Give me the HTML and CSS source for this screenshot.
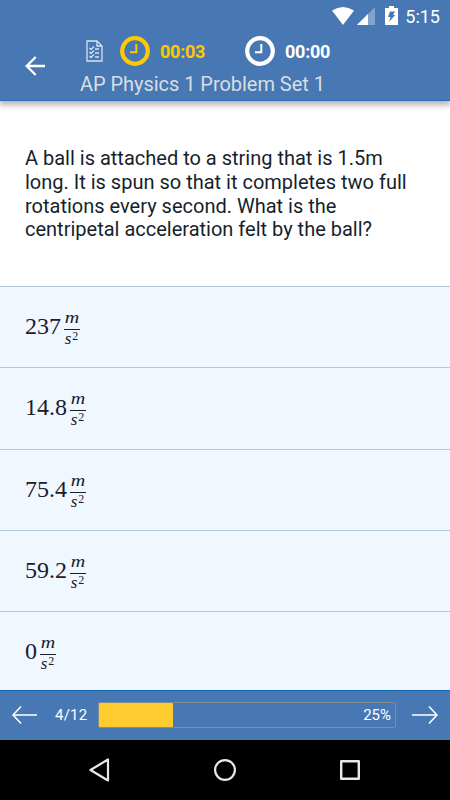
FILE: index.html
```html
<!DOCTYPE html>
<html lang="en">

<head>
    <meta charset="UTF-8">
    <meta name="viewport" content="width=device-width, initial-scale=1.0">
    <title>AP Physics 1 Problem Set 1</title>
    <link rel="stylesheet" href="styles.css">
</head>

<body>
    <header class="header">
        <!-- Status bar -->
        <div class="status-bar">
            <svg class="wifi" width="22" height="18" viewBox="0 0 22 18">
                <path d="M0 3.5Q11 -3.5 22 3.5L11 18Z" fill="#fff" />
            </svg>
            <svg class="signal" width="18" height="18" viewBox="0 0 18 18">
                <path d="M18 0V18H0Z" fill="#82a3cd" />
                <path d="M11 7V18H0Z" fill="#fff" />
            </svg>
            <svg class="battery" width="13" height="19" viewBox="0 0 13 19">
                <path d="M4 0H9V2H13V19H0V2H4Z" fill="#fff" />
                <path d="M5 5.5H10L8 9H10.2L4 16L5.5 11H3Z" fill="#4778b3" />
            </svg>
            <span class="clock">5:15</span>
        </div>

        <!-- Toolbar -->
        <div class="toolbar">
            <svg class="back-btn" width="20" height="20" viewBox="0 0 20 20">
                <path d="M20 10H2M10.7 1L1.7 10L10.7 19" fill="none" stroke="#fff" stroke-width="2.3" />
            </svg>
            <div class="toolbar-info">
                <div class="timers">
                    <svg class="checklist" width="17" height="22" viewBox="0 0 17 22">
                        <g fill="none" stroke="#d7e2ef" stroke-width="1.3">
                            <path d="M1 1H11L16 6V21H1ZM11 1V6H16" />
                            <path d="M3.5 8L5 9.5L8 6.5M3.5 12L5 13.5L8 10.5M3.5 16L5 17.5L8 14.5M9 9H13M9 13H13M9 17H13" />
                        </g>
                    </svg>
                    <svg class="timer-icon" width="30" height="30" viewBox="0 0 30 30">
                        <circle cx="15" cy="15" r="12.8" fill="none" stroke="#ffc800" stroke-width="4.2" />
                        <path d="M16.3 8V16.3H10" fill="none" stroke="#ffc800" stroke-width="2" />
                    </svg>
                    <span class="time time-active">00:03</span>
                    <svg class="timer-icon" width="30" height="30" viewBox="0 0 30 30">
                        <circle cx="15" cy="15" r="12.8" fill="none" stroke="#fff" stroke-width="4.2" />
                        <path d="M16.3 8V16.3H10" fill="none" stroke="#fff" stroke-width="2" />
                    </svg>
                    <span class="time">00:00</span>
                </div>
                <div class="title">AP Physics 1 Problem Set 1</div>
            </div>
        </div>
    </header>

    <main class="content">
        <p class="question">A ball is attached to a string that is 1.5m<br>long. It is spun so that it completes two full<br>rotations every second. What is the<br>centripetal acceleration felt by the ball?</p>

        <!-- Answers -->
        <div class="answers">
            <div class="answer">
                <span class="number">237</span>
                <span class="fraction"><i class="top">m</i><span class="bottom"><i>s</i><span class="power">2</span></span></span>
            </div>
            <div class="answer">
                <span class="number">14.8</span>
                <span class="fraction"><i class="top">m</i><span class="bottom"><i>s</i><span class="power">2</span></span></span>
            </div>
            <div class="answer">
                <span class="number">75.4</span>
                <span class="fraction"><i class="top">m</i><span class="bottom"><i>s</i><span class="power">2</span></span></span>
            </div>
            <div class="answer">
                <span class="number">59.2</span>
                <span class="fraction"><i class="top">m</i><span class="bottom"><i>s</i><span class="power">2</span></span></span>
            </div>
            <div class="answer">
                <span class="number">0</span>
                <span class="fraction"><i class="top">m</i><span class="bottom"><i>s</i><span class="power">2</span></span></span>
            </div>
        </div>
    </main>

    <!-- Progress -->
    <footer class="footer">
        <svg class="prev" width="26" height="20" viewBox="0 0 26 20">
            <path d="M25 10H1M9 1.5L1 10L9 18.5" fill="none" stroke="#fff" stroke-width="1.6" />
        </svg>
        <span class="count">4/12</span>
        <div class="progress">
            <div class="progress-fill" style="width: 25%"></div>
            <span class="percent">25%</span>
        </div>
        <svg class="next" width="26" height="20" viewBox="0 0 26 20">
            <path d="M0 10H25M17 1.5L25 10L17 18.5" fill="none" stroke="#fff" stroke-width="1.6" />
        </svg>
    </footer>

    <!-- System navigation -->
    <nav class="nav-bar">
        <svg width="24" height="24" viewBox="0 0 24 24">
            <path d="M20 1.5V22.5L2.5 12Z" fill="none" stroke="#e8e8e8" stroke-width="2.2" stroke-linejoin="round" />
        </svg>
        <svg width="24" height="24" viewBox="0 0 24 24">
            <circle cx="12" cy="12" r="9.9" fill="none" stroke="#e8e8e8" stroke-width="2.2" />
        </svg>
        <svg width="24" height="24" viewBox="0 0 24 24">
            <rect x="3.2" y="3.2" width="17.6" height="17.6" fill="none" stroke="#e8e8e8" stroke-width="2.4" stroke-linejoin="round" />
        </svg>
    </nav>
</body>

</html>
```

FILE: styles.css
```css
* {
    box-sizing: border-box;
}

body {
    display: flex;
    flex-direction: column;
    height: 800px;
    margin: 0;
    font-family: Roboto, sans-serif;
    background: #fff;
    overflow: hidden;
}

svg {
    display: block;
    flex-shrink: 0;
}

.header {
    position: relative;
    height: 101px;
    flex-shrink: 0;
    background: #4778b3;
    border-bottom: 1px solid #2d70b2;
    box-shadow: 0 3px 6px 1px rgba(0, 0, 0, 0.3);
    color: #fff;
}

.status-bar {
    display: flex;
    justify-content: flex-end;
    height: 32px;
    padding: 7px 10px 0 0;
}

.signal {
    margin-left: 3px;
}

.battery {
    margin: -1px 0 0 10px;
}

.clock {
    margin-left: 7px;
    font-size: 18px;
    line-height: 19px;
}

.toolbar {
    display: flex;
    padding-left: 25px;
}

.back-btn {
    margin-top: 24px;
}

.toolbar-info {
    padding: 4px 0 0 35px;
}

.timers {
    display: flex;
    align-items: center;
    height: 30px;
    padding-left: 6px;
}

.timer-icon {
    margin-left: 17px;
}

.time {
    width: 47px;
    margin-left: 10px;
    font-size: 18px;
    font-weight: 700;
    letter-spacing: -0.25px;
    white-space: nowrap;
}

.time + .timer-icon {
    margin-left: 38px;
}

.time-active {
    color: #ffc800;
}

.title {
    margin-top: 6px;
    font-size: 20px;
    line-height: 24px;
    letter-spacing: -0.04px;
    color: #dadde2;
    white-space: nowrap;
}

.content {
    flex: 1;
    min-height: 0;
    overflow: hidden;
}

.question {
    height: 185.3px;
    margin: 0;
    padding: 46px 25px 0;
    font-size: 20px;
    line-height: 23.8px;
    color: #161f2d;
    white-space: nowrap;
}

.answer {
    display: flex;
    height: 81.2px;
    padding: 27px 0 0 25px;
    background: #f0f7ff;
    border-top: 1px solid #b0c8df;
    font-family: "Liberation Serif", serif;
    color: #18202c;
}

.number {
    font-size: 24px;
    line-height: 24px;
}

.fraction {
    width: 16px;
    margin-left: 2.5px;
    font-size: 17px;
}

.top,
.bottom {
    display: flex;
    justify-content: center;
}

.top {
    height: 15px;
    line-height: 8px;
    transform: scaleX(1.18);
}

.bottom {
    height: 20px;
    border-top: 1px solid #18202c;
    line-height: 18px;
}

.power {
    margin-left: 1px;
    font-size: 12px;
    line-height: 12px;
}

.footer {
    position: relative;
    display: flex;
    align-items: center;
    height: 50px;
    flex-shrink: 0;
    padding: 0 12px 1px;
    background: #4778b3;
    border-top: 1px solid #1267b3;
    color: #fff;
}

.count {
    width: 43px;
    margin-left: 17px;
    font-size: 15px;
    letter-spacing: 0.2px;
}

.progress {
    display: flex;
    align-items: center;
    justify-content: space-between;
    width: 298px;
    height: 26px;
    border: 1px solid #7f8d94;
    border-radius: 2px;
}

.progress-fill {
    height: 24px;
    background: #ffcb2f;
    border-radius: 1px;
}

.percent {
    margin-right: 4px;
    font-size: 15px;
}

.next {
    margin-left: auto;
}

.nav-bar {
    display: flex;
    align-items: center;
    justify-content: center;
    gap: 101px;
    height: 60px;
    flex-shrink: 0;
    background: #000;
}
```
